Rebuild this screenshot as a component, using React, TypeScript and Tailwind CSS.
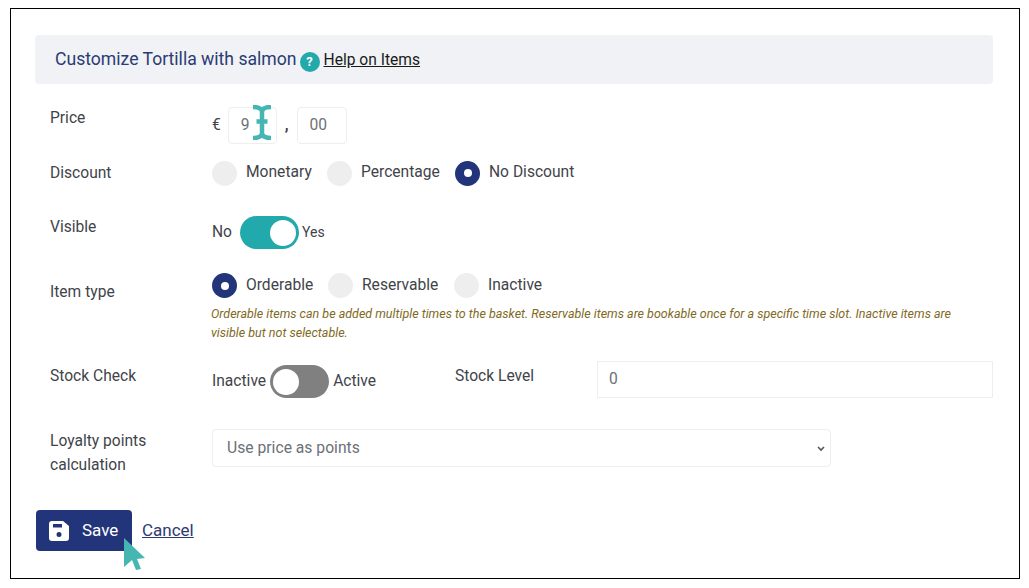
import type { ReactNode } from "react"

function Radio({ label, checked, width }: { label: string; checked?: boolean; width: string }) {
  return (
    <div className={`flex items-center ${width}`}>
      {checked ? (
        <span className="flex h-[25px] w-[25px] shrink-0 items-center justify-center rounded-full bg-[#23357a]">
          <span className="h-[8px] w-[8px] rounded-full bg-white" />
        </span>
      ) : (
        <span className="h-[25px] w-[25px] shrink-0 rounded-full bg-[#eeeeee]" />
      )}
      <span className="ml-[9px] whitespace-nowrap">{label}</span>
    </div>
  )
}

function Label({ children, className = "" }: { children: ReactNode; className?: string }) {
  return <div className={`w-[162px] shrink-0 leading-[20px] ${className}`}>{children}</div>
}

export default function App() {
  return (
    <div className="h-[588px] w-[1029px] overflow-hidden bg-white pl-[10px] pt-[8px] font-['Roboto',sans-serif] text-[15.6px] text-[#3f444a]">
      <div className="relative h-[571px] w-[1010px] border border-black pl-[24px] pr-[26px] pt-[26px]">
        <div className="flex h-[49px] items-center rounded bg-[#f0f2f5] pl-[20px]">
          <span className="text-[17.6px] text-[#2b3b73]">Customize Tortilla with salmon</span>
          <span className="ml-[3px] mt-[4px] flex h-[20px] w-[20px] items-center justify-center rounded-full bg-[#22a9ab] text-[13px] font-bold text-white">?</span>
          <a className="ml-[4px] mt-[3px] text-[#1a1a1a] underline">Help on Items</a>
        </div>

        <div className="flex h-[55px] pl-[15px] pt-[23px]">
          <Label className="mt-[1px]">Price</Label>
          <div className="flex items-center self-start">
            <span>€</span>
            <span className="ml-[7px] flex h-[37px] w-[49px] items-center rounded border border-[#eeeeee] pl-[12px] text-[#6b7177]">9</span>
            <span className="ml-[8px] font-bold">,</span>
            <span className="ml-[8px] flex h-[37px] w-[50px] items-center rounded border border-[#eeeeee] pl-[12px] text-[#6b7177]">00</span>
          </div>
        </div>

        <div className="flex h-[50px] items-center pl-[15px] pt-[18px]">
          <Label>Discount</Label>
          <Radio label="Monetary" width="w-[115px]" />
          <Radio label="Percentage" width="w-[128px]" />
          <Radio label="No Discount" checked width="w-[130px]" />
        </div>

        <div className="flex h-[60px] pl-[15px] pt-[27px]">
          <Label className="mt-[1px]">Visible</Label>
          <div className="flex h-[33px] items-center">
            <span>No</span>
            <span className="ml-[8px] flex h-[33px] w-[59px] items-center justify-end rounded-full bg-[#22a9ab] pr-[3px]">
              <span className="h-[26px] w-[26px] rounded-full bg-white" />
            </span>
            <span className="ml-[3px] text-[14px]">Yes</span>
          </div>
        </div>

        <div className="flex h-[91px] pl-[15px] pt-[24px]">
          <Label className="pt-[9px]">Item type</Label>
          <div className="w-[760px]">
            <div className="flex items-center">
              <Radio label="Orderable" checked width="w-[116px]" />
              <Radio label="Reservable" width="w-[126px]" />
              <Radio label="Inactive" width="w-[100px]" />
            </div>
            <p className="-ml-[1px] mt-[6px] text-[12.5px] italic leading-[19px] text-[#7f6a1e]">
              Orderable items can be added multiple times to the basket. Reservable items are bookable once for a specific time slot. Inactive items are visible but not selectable.
            </p>
          </div>
        </div>

        <div className="flex h-[60px] pl-[15px] pt-[25px]">
          <Label className="mt-[1px]">Stock Check</Label>
          <div className="flex h-[33px] w-[243px] shrink-0 items-center">
            <span>Inactive</span>
            <span className="ml-[4px] flex h-[33px] w-[59px] items-center rounded-full bg-[#808080] pl-[3px]">
              <span className="h-[26px] w-[26px] rounded-full bg-white" />
            </span>
            <span className="ml-[4px]">Active</span>
          </div>
          <div className="mt-[1px] w-[142px] shrink-0 leading-[20px]">Stock Level</div>
          <div className="-mt-[4px] flex h-[37px] w-[396px] items-center border border-[#eeeeee] pl-[11px] text-[#6b7177]">0</div>
        </div>

        <div className="flex pl-[15px] pt-[30px]">
          <div className="-mt-[1px] w-[162px] shrink-0 leading-[24px]">
            Loyalty points<br />calculation
          </div>
          <div className="-mt-[1px] flex h-[38px] w-[619px] items-center justify-between rounded border border-[#eeeeee] pl-[14px] pr-[3px] text-[15.7px] text-[#6b7177]">
            <span>Use price as points</span>
            <svg width="12" height="12" viewBox="0 0 12 12" fill="none" stroke="#555" strokeWidth="1.6"><path d="M3 5l3 3 3-3" /></svg>
          </div>
        </div>

        <div className="flex items-center pl-[1px] pt-[33px]">
          <button className="flex h-[41px] w-[96px] items-center rounded bg-[#23357a] pl-[13px] text-[17px] text-white">
            <svg width="20" height="20" viewBox="0 0 20 20" fill="white">
              <path fillRule="evenodd" d="M3 0h11l6 5v12a3 3 0 0 1-3 3H3a3 3 0 0 1-3-3V3a3 3 0 0 1 3-3zM4 3v3.500h9V3zM10 11a2.500 2.500 0 1 0 0 5 2.500 2.500 0 0 0 0-5z" />
            </svg>
            <span className="ml-[13px]">Save</span>
          </button>
          <a className="ml-[10px] text-[17px] text-[#2b3b73] underline">Cancel</a>
        </div>

        {/* cursors drawn over the page */}
        <svg className="absolute left-[242px] top-[96px]" width="18" height="35" viewBox="0 0 18 35" fill="none" stroke="#45b6b1" strokeWidth="4.500">
          <path d="M0 2c5 0 8 1 9 4v23c-1 3-4 4-9 4M18 2c-5 0-8 1-9 4v23c1 3 4 4 9 4M3.500 16.500h11" />
        </svg>
        <svg className="absolute left-[112px] top-[529px]" width="24" height="34" viewBox="0 0 24 34" fill="#45b6b1">
          <path d="M1 0l21 20-8 1 4 10-5 1-4-10-8 7z" />
        </svg>
      </div>
    </div>
  )
}
